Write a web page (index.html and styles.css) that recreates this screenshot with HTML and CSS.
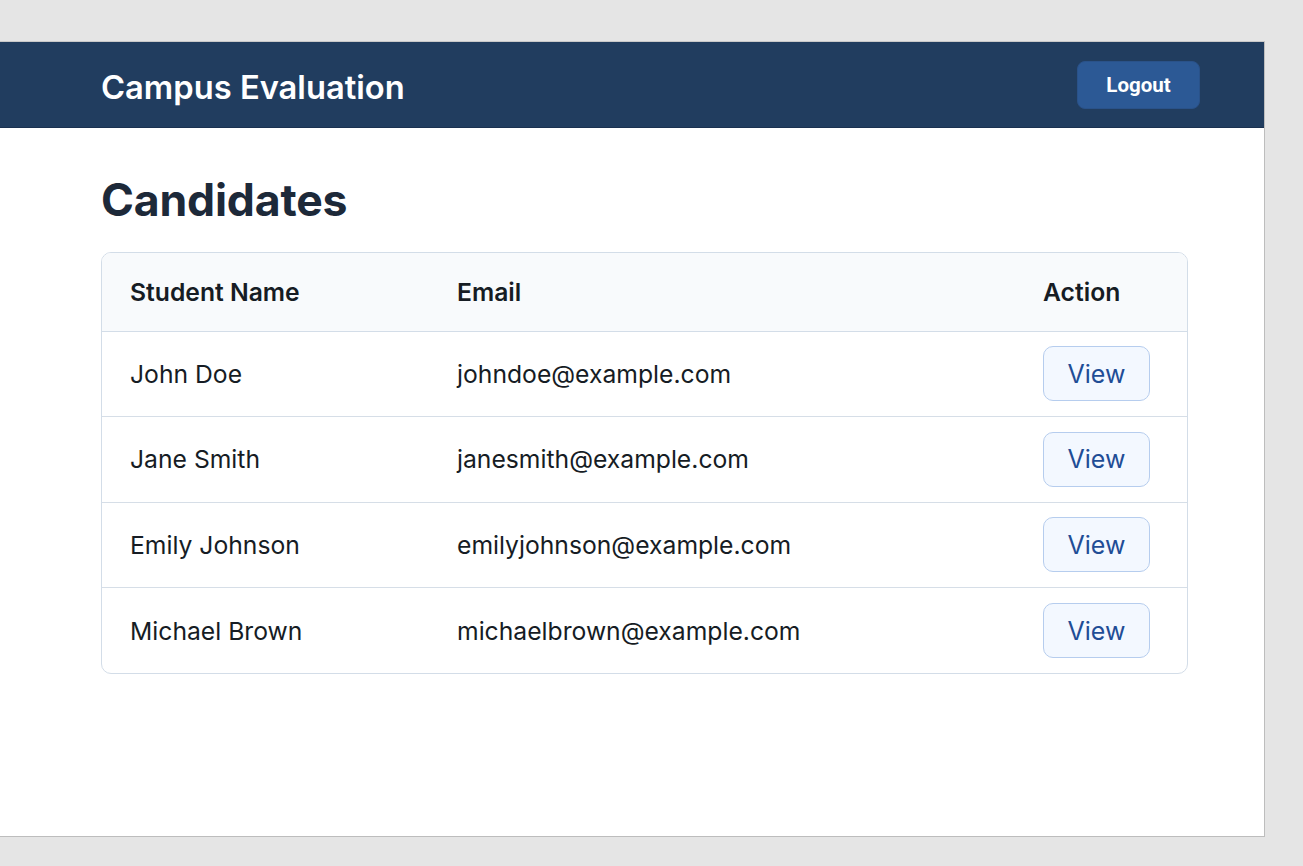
FILE: index.html
```html
<!DOCTYPE html>
<html lang="en">
<head>
<meta charset="utf-8">
<title>Campus Evaluation</title>
<link rel="stylesheet" href="styles.css">
</head>
<body>
<div class="page">
  <header class="topbar">
    <div class="brand">Campus Evaluation</div>
    <button class="logout">Logout</button>
  </header>
  <main class="content">
    <h1 class="title">Candidates</h1>
    <div class="card">
      <table class="grid">
        <colgroup>
          <col class="c-name">
          <col class="c-email">
          <col class="c-action">
        </colgroup>
        <thead>
          <tr><th>Student Name</th><th>Email</th><th>Action</th></tr>
        </thead>
        <tbody>
          <tr><td>John Doe</td><td>johndoe@example.com</td><td><button class="view">View</button></td></tr>
          <tr><td>Jane Smith</td><td>janesmith@example.com</td><td><button class="view">View</button></td></tr>
          <tr><td>Emily Johnson</td><td>emilyjohnson@example.com</td><td><button class="view">View</button></td></tr>
          <tr><td>Michael Brown</td><td>michaelbrown@example.com</td><td><button class="view">View</button></td></tr>
        </tbody>
      </table>
    </div>
  </main>
</div>
</body>
</html>
```

FILE: styles.css
```css
* { box-sizing: border-box; }
html, body { margin: 0; padding: 0; }
body {
  background: #e5e5e5;
  font-family: Inter, "Noto Sans", sans-serif;
  height: 866px;
  overflow: hidden;
}
.page {
  margin-top: 41px;
  width: 1265px;
  height: 796px;
  background: #ffffff;
  border-top: 1px solid #c9c9c9;
  border-right: 1px solid #bdbdbd;
  border-bottom: 1px solid #bdbdbd;
}
.topbar {
  height: 86px;
  background: #213d5f;
  border-bottom: 1px solid #1a3150;
  display: flex;
  align-items: center;
  justify-content: space-between;
  padding: 0 64px 0 101px;
}
.brand {
  color: #ffffff;
  font-size: 32.7px;
  font-weight: 600;
  margin-top: 4px;
}
.logout {
  width: 123px;
  height: 48px;
  margin-top: 1px;
  border: 1px solid #2a5289;
  border-radius: 8px;
  background: #2c5995;
  color: #ffffff;
  font-family: Roboto, "Liberation Sans", sans-serif;
  font-weight: 700;
  font-size: 20.5px;
  padding: 0;
}
.content {
  padding: 0 76px 0 101px;
}
.title {
  margin: 46px 0 26px;
  font-size: 44.6px;
  line-height: 52px;
  font-weight: 700;
  color: #1d2939;
  letter-spacing: -0.2px;
}
.card {
  width: 1087px;
  border: 1px solid #d3dde8;
  border-radius: 10px;
  overflow: hidden;
}
.grid {
  width: 100%;
  border-collapse: collapse;
  table-layout: fixed;
}
.c-name { width: 327px; }
.c-action { width: 172px; }
.grid th, .grid td {
  text-align: left;
  padding: 0 0 0 28px;
  font-size: 24.7px;
  color: #161c24;
}
.grid th {
  height: 78px;
  background: #f8fafc;
  font-weight: 600;
  border-bottom: 1px solid #d3dde8;
}
.grid td {
  height: 85.5px;
  font-weight: 400;
  border-bottom: 1px solid #d6dee7;
}
.grid tbody tr:last-child td { border-bottom: none; }
.view {
  width: 107px;
  height: 55px;
  border: 1px solid #b6cdee;
  border-radius: 10px;
  background: #f3f8ff;
  color: #1f4d96;
  font-family: Inter, "Noto Sans", sans-serif;
  font-size: 25px;
  font-weight: 400;
  padding: 0;
}
```
